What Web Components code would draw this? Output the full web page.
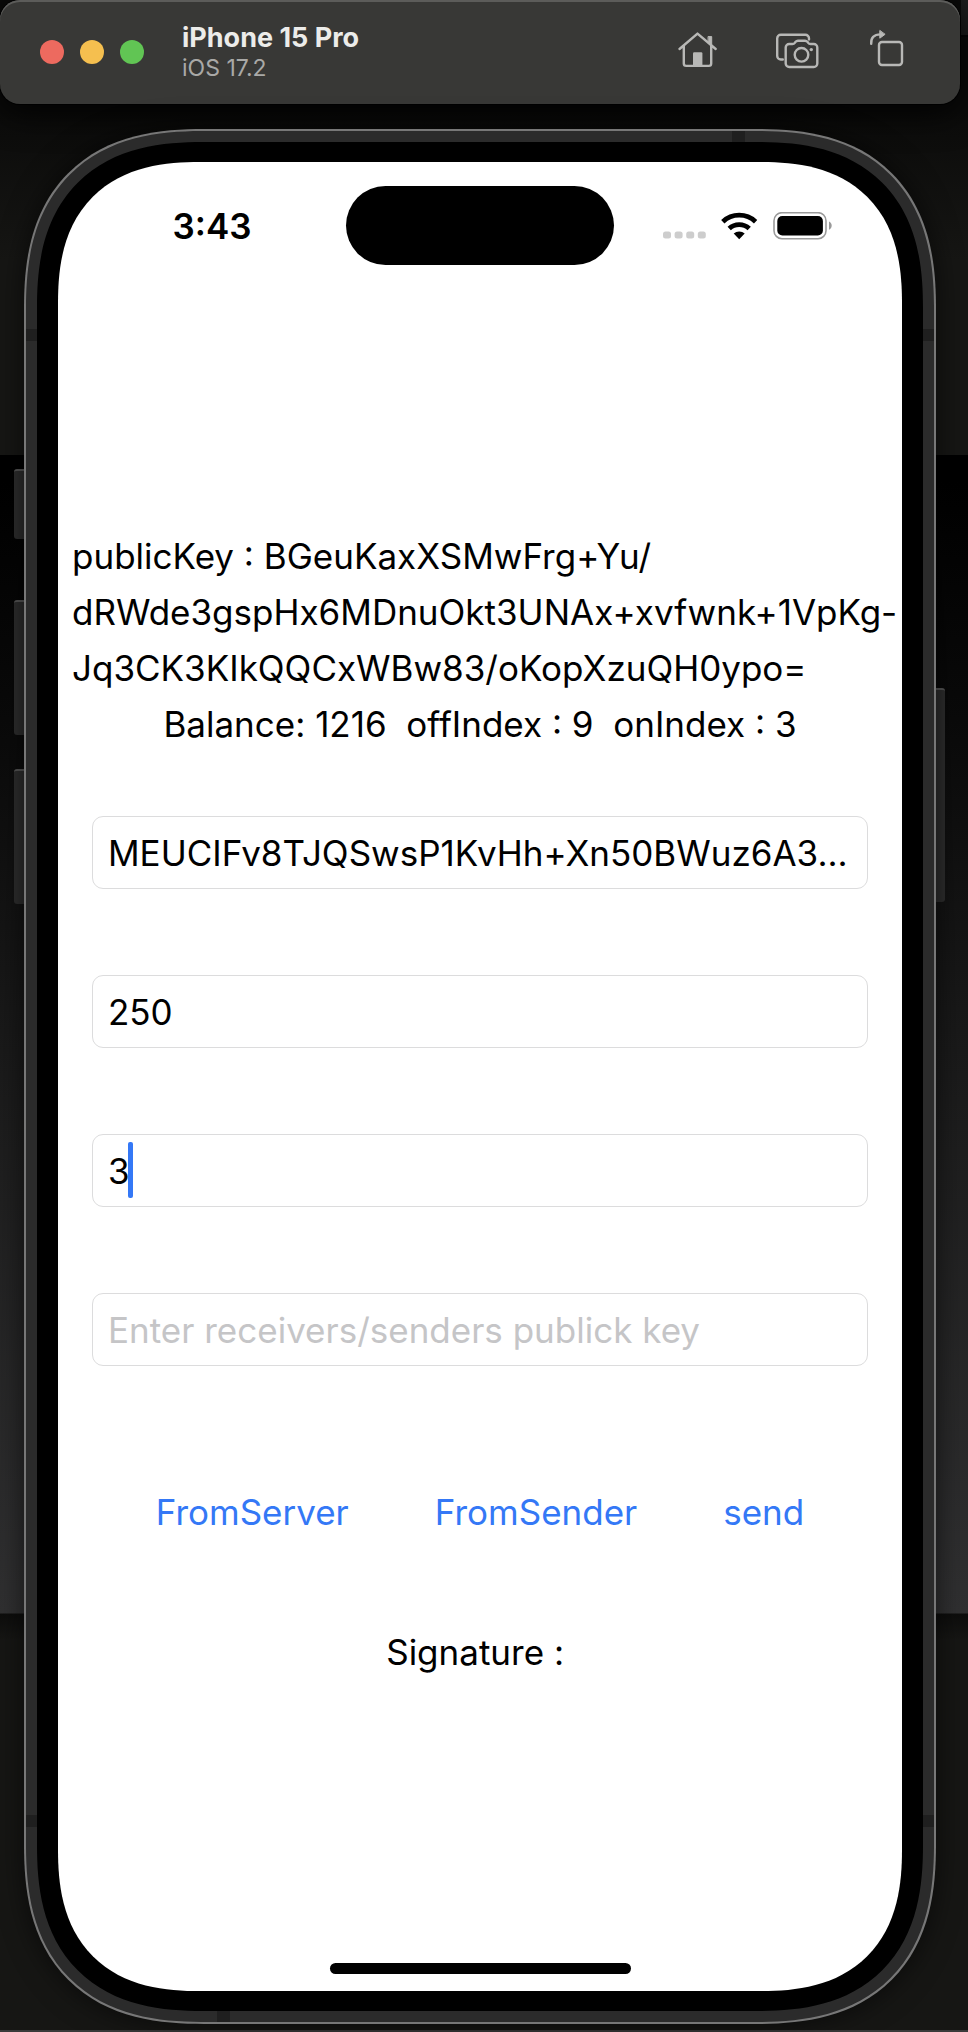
<!DOCTYPE html>
<html lang="en">
<head>
<meta charset="utf-8">
<meta name="viewport" content="width=device-width, initial-scale=1">
<title>iPhone 15 Pro – iOS 17.2</title>
<style>
  body { margin: 0; background: #161614; font-family: Inter, "Liberation Sans", sans-serif; }
</style>
</head>
<body>
<simulator-desktop>
  <simulator-toolbar>
    <span slot="name">iPhone 15 Pro</span>
    <span slot="system">iOS 17.2</span>
  </simulator-toolbar>
  <phone-device>
    <status-bar>3:43</status-bar>
    <wallet-screen></wallet-screen>
    <home-indicator></home-indicator>
  </phone-device>
</simulator-desktop>

<script>
class BaseElement extends HTMLElement {
  constructor() {
    super();
    this.attachShadow({ mode: "open" }).innerHTML = this.render();
  }
}

// Windows lying behind the simulator, seen round the device
customElements.define("simulator-desktop", class extends BaseElement {
  render() {
    return `<style>
      :host {
        display: flex; flex-direction: column; box-sizing: border-box; min-height: 100vh;
        border-bottom: 2px solid #3a3a3a;
        background:
          linear-gradient(#1e1e1e 0 35px, #050505 35px 37px, transparent 37px) right top / 7px 100% no-repeat,
          linear-gradient(#0b0b0a 0 110px, #161614 260px, #161614 455px, #000 455px, #0a0a0a 720px, #1a1a1a 1050px, #303031 1613px, #0d0d0c 1614px, #161614 1640px);
      }
    </style><slot></slot>`;
  }
});

customElements.define("simulator-toolbar", class extends BaseElement {
  render() {
    return `<style>
      :host {
        display: flex; align-items: center; box-sizing: border-box; height: 104px;
        margin-right: 8px; padding: 0 44px 0 40px; border-radius: 20px;
        background: #383836; color: #b8b8b6;
        box-shadow: inset 0 2px 0 #5c5c5a, 0 0 0 1px #000, 0 6px 36px #000;
      }
      .lights { display: flex; gap: 16px; }
      .lights button { width: 24px; height: 24px; padding: 0; border: 0; border-radius: 50%; }
      .close { background: #ed6a5f; }
      .minimise { background: #f5bf4f; }
      .zoom { background: #61c554; }
      .title { flex: 1; margin-left: 38px; }
      h1 { margin: 0; color: #ececea; font-size: 27px; line-height: 32px; font-weight: 700; }
      p { margin: 0; color: #a9a9a7; font-size: 23px; line-height: 28px; }
      .tools { display: flex; gap: 40px; }
      .tools button { display: block; padding: 0; border: 0; background: none; color: inherit; }
      svg { display: block; width: 56px; height: 56px; fill: none; stroke: currentColor;
            stroke-width: 2.4; stroke-linejoin: round; stroke-linecap: round; }
    </style>
    <div class="lights">
      <button class="close" aria-label="Close"></button>
      <button class="minimise" aria-label="Minimise"></button>
      <button class="zoom" aria-label="Zoom"></button>
    </div>
    <div class="title"><h1><slot name="name"></slot></h1><p><slot name="system"></slot></p></div>
    <div class="tools">
      <button aria-label="Home"><svg viewBox="668 24 56 56">
        <path d="M679.5 49 697.5 33.6 715.7 49M683.8 46v17.5a2.4 2.4 0 0 0 2.4 2.4h22.6a2.4 2.4 0 0 0 2.4-2.4V46"/>
        <path d="M708.4 36.6h3.3v9l-3.3-3z" fill="currentColor" stroke-width="1"/>
        <path d="M693 66V53.5a1.2 1.2 0 0 1 1.2-1.2h7a1.2 1.2 0 0 1 1.2 1.2V66z" fill="currentColor" stroke="none"/>
      </svg></button>
      <button aria-label="Screenshot"><svg viewBox="764 24 56 56">
        <path d="M782.8 59.5h-2a3.6 3.6 0 0 1-3.6-3.6V38.4a3.6 3.6 0 0 1 3.6-3.6h24.6a3.6 3.6 0 0 1 3.6 3.6v1"/>
        <path d="M789.2 44h3.3c1 0 1.7-.3 2.3-1.1l.8-1.1c.7-.8 1.3-1.1 2.3-1.1h7.2c1 0 1.6.3 2.3 1.1l.8 1.1c.6.8 1.3 1.1 2.3 1.1h3.3a3.5 3.5 0 0 1 3.5 3.5v16a3.5 3.5 0 0 1-3.5 3.5h-24.6a3.5 3.5 0 0 1-3.5-3.5v-16a3.5 3.5 0 0 1 3.5-3.5z"/>
        <circle cx="801.5" cy="54.8" r="6.8"/>
        <circle cx="811.3" cy="49.6" r="1.7" fill="currentColor" stroke="none"/>
      </svg></button>
      <button aria-label="Rotate"><svg viewBox="860 24 56 56">
        <rect x="879" y="42" width="23" height="23" rx="3"/>
        <path d="M871.2 43.8c-.4-5.800 2.500-9.400 9.300-9.400"/>
        <path d="M879.8 30.8v7.4l5-3.7z" fill="currentColor" stroke-width="1"/>
      </svg></button>
    </div>`;
  }
});

// Titanium frame, black bezel and display, with the hardware buttons on the sides
customElements.define("phone-device", class extends BaseElement {
  render() {
    return `<style>
      :host { position: relative; flex: 1; display: flex; margin: 25px 32px 6px 24px; }
      .frame, .bezel, .display { flex: 1; display: flex; flex-direction: column; min-width: 0; box-sizing: border-box; }
      .frame { position: relative; padding: 11px; border: 2px solid #777; border-radius: 151px; background: #2b2b2b; box-shadow: 0 0 28px #0009; }
      .bezel { position: relative; padding: 20px 21px; border-radius: 139px; background: #000; }
      .display { border-radius: 118px; background: #fff; color: #000; }
      @supports (corner-shape: superellipse(1.3)) {
        .frame, .bezel, .display { corner-shape: superellipse(1.3); }
        .frame { border-radius: 180px; }
        .bezel { border-radius: 166px; }
        .display { border-radius: 142px; }
      }
      i { position: absolute; background: #1f1f1f; }
      .across { left: 0; right: 0; height: 12px; }
      .upper { top: 198px; }
      .lower { bottom: 195px; }
      .top { top: 0; right: 189px; width: 13px; height: 11px; }
      .bottom { bottom: 0; left: 191px; width: 13px; height: 11px; }
      b { position: absolute; box-sizing: border-box; width: 10px; background: #2d2d2d; border-top: 2px solid #555; }
      .left { left: -10px; border-radius: 3px 0 0 3px; }
      .right { left: 100%; width: 9px; border-radius: 0 3px 3px 0; }
      .action { top: 340px; height: 70px; }
      .up { top: 471px; height: 135px; }
      .down { top: 640px; height: 135px; }
      .power { top: 559px; height: 214px; }
    </style>
    <b class="left action"></b><b class="left up"></b><b class="left down"></b><b class="right power"></b>
    <div class="frame">
      <i class="across upper"></i><i class="across lower"></i><i class="top"></i><i class="bottom"></i>
      <div class="bezel"><div class="display"><slot></slot></div></div>
    </div>`;
  }
});

customElements.define("status-bar", class extends BaseElement {
  render() {
    return `<style>
      :host { display: grid; grid-template-columns: 1fr 268px 1fr; align-items: center; padding-top: 24px; }
      time { justify-self: center; margin-left: 20px; font-size: 35px; line-height: 44px; font-weight: 600; }
      .island { height: 79px; border-radius: 40px; background: #000; }
      .signs { justify-self: center; margin-right: 20px; }
      svg { display: block; width: 170px; height: 28px; }
    </style>
    <time><slot></slot></time>
    <div class="island"></div>
    <div class="signs">
      <svg viewBox="663 211 170 28" role="img" aria-label="No signal, Wi-Fi, battery full">
        <g fill="#cdcdcd">
          <rect x="663" y="230.500" width="8" height="7" rx="2.500"/><rect x="674.600" y="230.500" width="8" height="7" rx="2.500"/>
          <rect x="686.200" y="230.500" width="8" height="7" rx="2.500"/><rect x="697.800" y="230.500" width="8" height="7" rx="2.500"/>
        </g>
        <g fill="none" stroke="#000" stroke-width="4.800">
          <path d="M722.800 220.700a24 24 0 0 1 32.800 0"/>
          <path d="M729.200 227.600a14.600 14.600 0 0 1 20 0"/>
        </g>
        <path d="M739.200 238.200l-5.500-5.600a8 8 0 0 1 11 0z"/>
        <rect x="774" y="211.700" width="52" height="26" rx="8" fill="none" stroke="#9a9a9a" stroke-width="1.600"/>
        <rect x="777.300" y="215" width="45.600" height="19.400" rx="5"/>
        <path d="M829 220.500c3.600 1.300 3.600 6.900 0 8.200z" fill="#9a9a9a"/>
      </svg>
    </div>`;
  }
});

customElements.define("text-field", class extends BaseElement {
  render() {
    const attr = name => this.getAttribute(name) || "";
    return `<style>
      :host { position: relative; display: block; }
      input {
        display: block; box-sizing: border-box; width: 100%; height: 73px; margin: 0; padding: 0 15px;
        border: 1px solid #dcdcdd; border-radius: 11px; background: #fff; color: #000; outline: 0;
        font: inherit; text-overflow: ellipsis;
      }
      input::placeholder { color: #c5c5c7; opacity: 1; }
      .caret { position: absolute; top: 8px; left: 36px; width: 5px; height: 56px; border-radius: 2px; background: #3478f6; }
    </style>
    <input type="text" aria-label="${attr("label")}" value="${attr("value")}" placeholder="${attr("placeholder")}">
    ${this.hasAttribute("editing") ? `<span class="caret"></span>` : ""}`;
  }
});

customElements.define("link-button", class extends BaseElement {
  render() {
    return `<style>
      :host { display: block; }
      button { display: block; margin: 0; padding: 0; border: 0; background: none; color: #3478f6; font: inherit; line-height: inherit; }
    </style><button type="button"><slot></slot></button>`;
  }
});

customElements.define("wallet-screen", class extends BaseElement {
  render() {
    return `<style>
      :host { flex: 1; display: block; padding: 263px 14px 0; font-size: 35px; line-height: 56px; }
      p { margin: 0; white-space: pre; }
      .centre { text-align: center; }
      .fields { display: flex; flex-direction: column; gap: 86px; margin: 64px 20px 118px; }
      .actions { display: flex; justify-content: center; gap: 86px; margin-bottom: 84px; }
    </style>
    <p>publicKey : BGeuKaxXSMwFrg+Yu/
dRWde3gspHx6MDnuOkt3UNAx+xvfwnk+1VpKg-
Jq3CK3KIkQQCxWBw83/oKopXzuQH0ypo=</p>
    <p class="centre">Balance: 1216  offIndex : 9  onIndex : 3</p>
    <div class="fields">
      <text-field label="Signature" value="MEUCIFv8TJQSwsP1KvHh+Xn50BWuz6A3..."></text-field>
      <text-field label="Amount" value="250"></text-field>
      <text-field label="Index" value="3" editing></text-field>
      <text-field label="Public key" placeholder="Enter receivers/senders publick key"></text-field>
    </div>
    <div class="actions">
      <link-button>FromServer</link-button><link-button>FromSender</link-button><link-button>send</link-button>
    </div>
    <p class="centre">Signature : </p>`;
  }
});

customElements.define("home-indicator", class extends BaseElement {
  render() {
    return `<style>
      :host { display: block; align-self: center; width: 301px; height: 11px; margin-bottom: 17px; border-radius: 6px; background: #000; }
    </style>`;
  }
});
</script>
</body>
</html>
